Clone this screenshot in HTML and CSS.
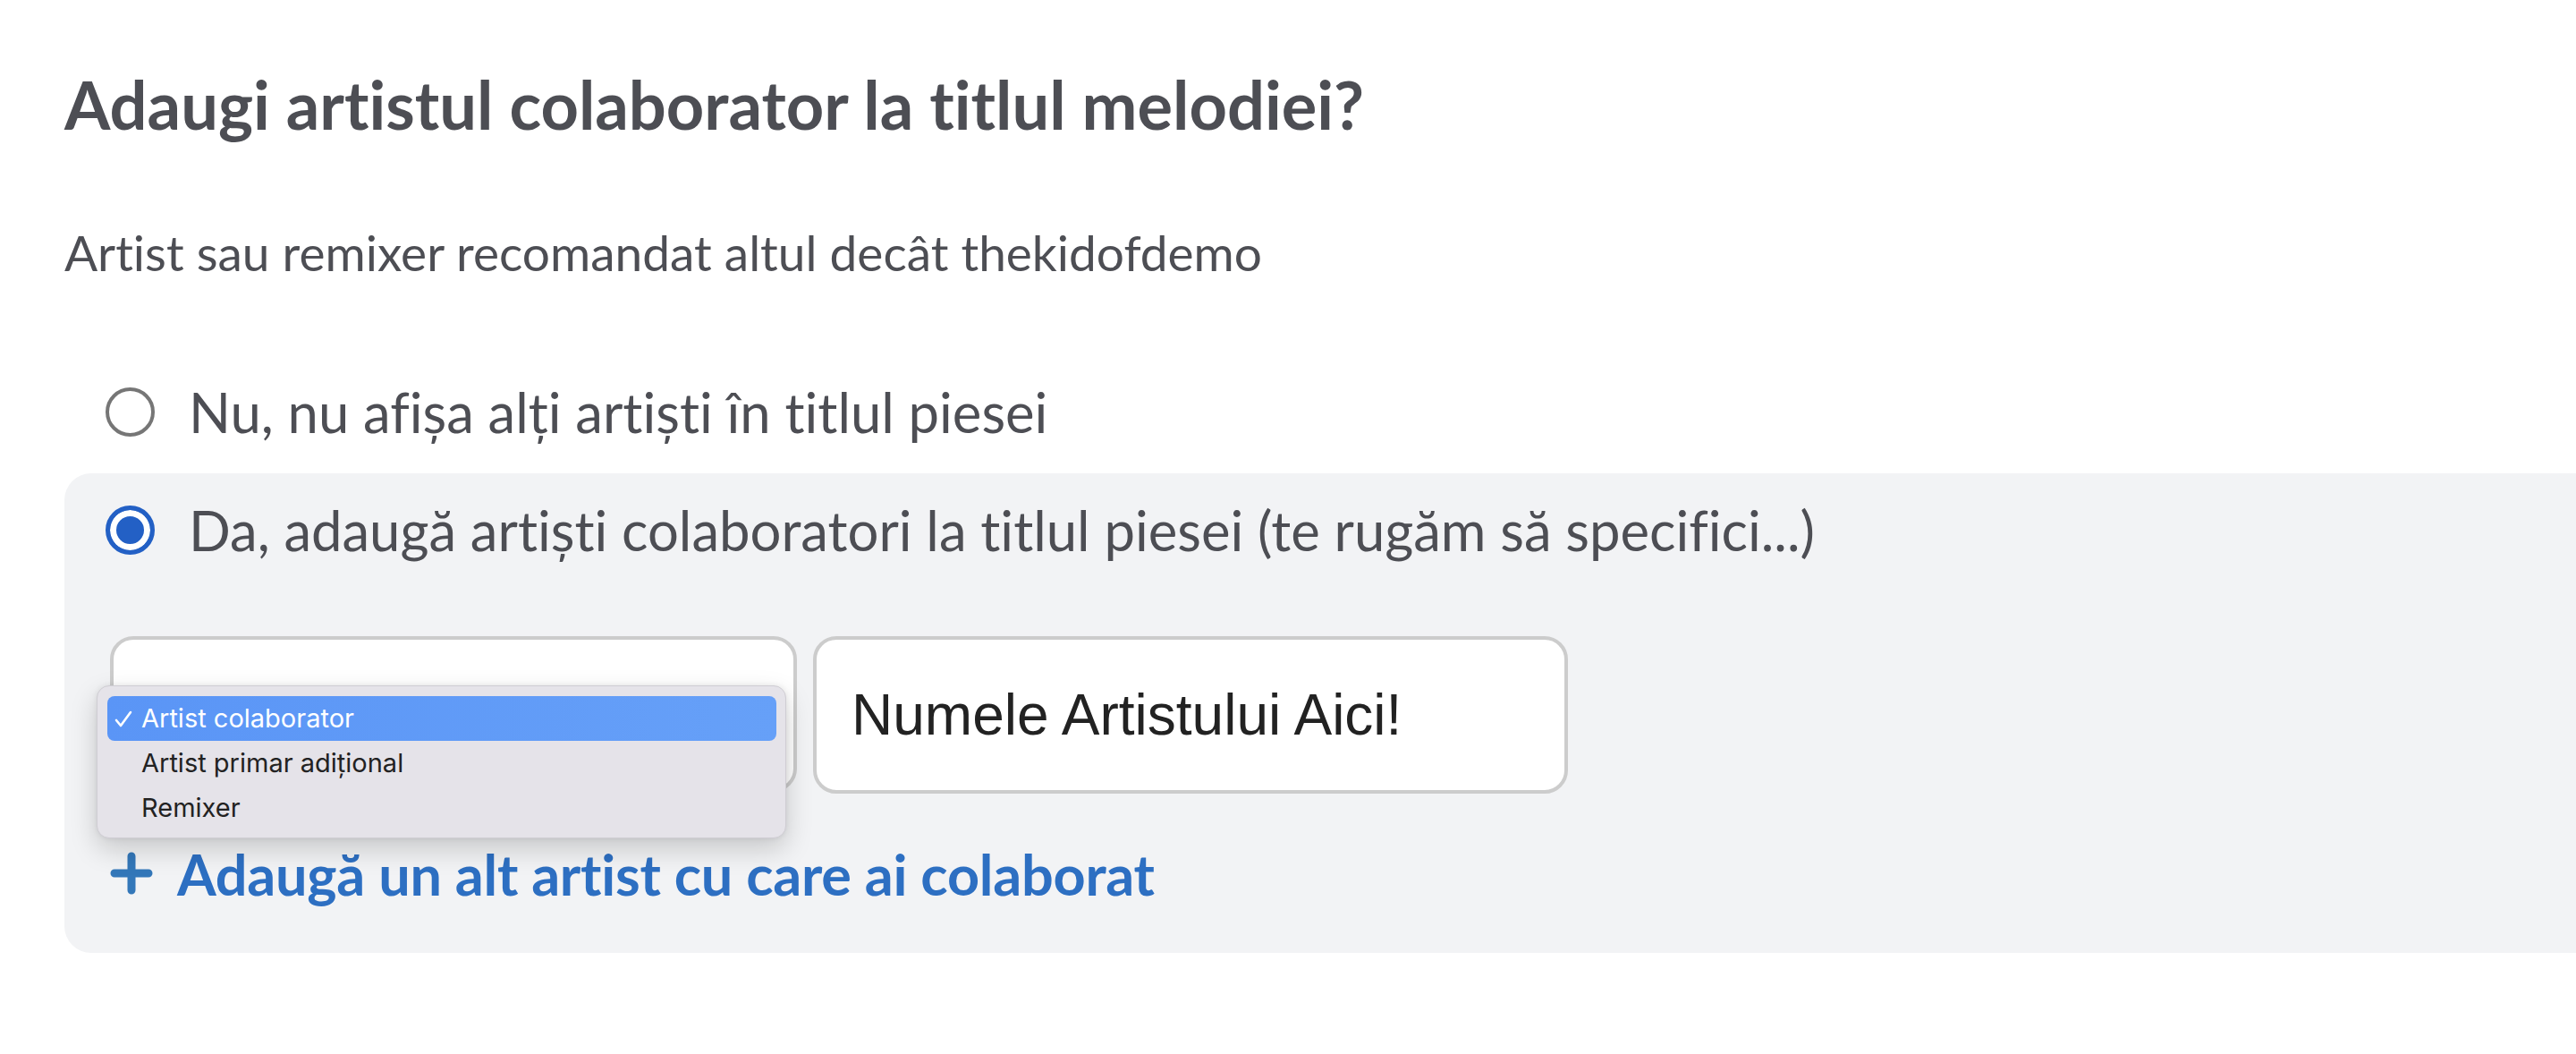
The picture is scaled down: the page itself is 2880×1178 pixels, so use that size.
FILE: index.html
```html
<!DOCTYPE html>
<html lang="ro">
<head>
    <meta charset="UTF-8">
    <meta name="viewport" content="width=device-width, initial-scale=1.0">
    <title>Artist colaborator</title>
    <link rel="stylesheet" href="styles.css">
</head>
<body>
    <main class="page">
        <h1 class="title">Adaugi artistul colaborator la titlul melodiei?</h1>
        <p class="hint">Artist sau remixer recomandat altul decât thekidofdemo</p>

        <div class="options">
            <label class="option">
                <input type="radio" name="featured" class="radio">
                <span class="option-text">Nu, nu afișa alți artiști în titlul piesei</span>
            </label>

            <div class="option option-selected">
                <label class="option-row">
                    <input type="radio" name="featured" class="radio" checked>
                    <span class="option-text">Da, adaugă artiști colaboratori la titlul piesei (te rugăm să specifici...)</span>
                </label>

                <div class="fields">
                    <div class="select-wrap">
                        <div class="select-box"></div>
                        <ul class="popup-menu">
                            <li class="popup-item active">
                                <svg class="check" viewBox="0 0 20 20" width="20" height="20">
                                    <path d="M2 11 L7 17 L18 2" fill="none" stroke="currentColor" stroke-width="2.6" stroke-linecap="round" stroke-linejoin="round"/>
                                </svg>
                                Artist colaborator
                            </li>
                            <li class="popup-item">Artist primar adițional</li>
                            <li class="popup-item">Remixer</li>
                        </ul>
                    </div>
                    <input type="text" class="text-field" value="Numele Artistului Aici!">
                </div>

                <a href="#" class="add-link">
                    <svg class="plus" viewBox="0 0 48 48" width="48" height="48">
                        <path d="M24 5 V43 M5 24 H43" stroke="currentColor" stroke-width="9" stroke-linecap="round"/>
                    </svg>
                    Adaugă un alt artist cu care ai colaborat
                </a>
            </div>
        </div>
    </main>
</body>
</html>
```

FILE: styles.css
```css
* {
    margin: 0;
    padding: 0;
    box-sizing: border-box;
}

html, body {
    width: 100%;
    height: 100%;
    overflow: hidden;
}

body {
    background: #fff;
    font-family: 'Lato', 'Noto Sans', sans-serif;
    font-variant-ligatures: no-common-ligatures;
    color: #4d4e54;
}

.page {
    padding: 73px 0 0 72px;
}

.title {
    font-size: 74px;
    font-weight: 700;
    line-height: 1.2;
}

.hint {
    margin-top: 87px;
    font-size: 55px;
    line-height: 1.2;
}

.options {
    margin-top: 81px;
}

.option {
    display: flex;
    align-items: center;
    padding: 28px 46px 31px;
}

.option-text {
    font-size: 61.6px;
    line-height: 1.2;
}

.option-selected {
    display: block;
    background: #f2f3f5;
    border-radius: 30px 0 0 30px;
    padding: 27px 0 51px 46px;
}

.option-row {
    display: flex;
    align-items: center;
}

.radio {
    appearance: none;
    -webkit-appearance: none;
    flex: none;
    width: 55px;
    height: 55px;
    margin-right: 38px;
    border: 4px solid #767676;
    border-radius: 50%;
    background: #fff;
}

.radio:checked {
    border: 5px solid #2360c5;
    background: #2360c5;
    box-shadow: inset 0 0 0 7px #fff;
}

.fields {
    display: flex;
    gap: 18px;
    margin-top: 81px;
    padding-left: 5px;
}

.select-wrap {
    position: relative;
    width: 768px;
    height: 176px;
}

.select-box {
    width: 100%;
    height: 174px;
    background: #fff;
    border: 4px solid #cccccc;
    border-radius: 26px;
}

.text-field {
    width: 844px;
    height: 176px;
    padding: 0 0 0 39px;
    background: #fff;
    border: 4px solid #cccccc;
    border-radius: 26px;
    font-family: 'Liberation Sans', Arial, sans-serif;
    font-size: 64px;
    color: #222;
    outline: none;
}

.popup-menu {
    position: absolute;
    top: 55px;
    left: -15px;
    width: 771px;
    height: 171px;
    padding: 11px 10px 10px 11px;
    list-style: none;
    background: #e5e3e9;
    border: 1px solid #cfcdd3;
    border-radius: 14px;
    box-shadow: 0 12px 30px rgba(0, 0, 0, 0.18), 0 0 6px rgba(0, 0, 0, 0.08);
    font-family: 'Inter', 'Roboto', sans-serif;
    font-size: 29px;
    color: #222;
}

.popup-item {
    display: flex;
    align-items: center;
    height: 50px;
    padding-left: 38px;
    border-radius: 8px;
}

.popup-item.active {
    position: relative;
    color: #fff;
    background: linear-gradient(90deg, #5a95f6 0%, #66a0f8 100%);
}

.check {
    position: absolute;
    left: 8px;
    top: 16px;
}

.add-link {
    display: inline-flex;
    align-items: center;
    margin-top: 52px;
    padding-left: 5px;
    font-size: 63px;
    font-weight: 700;
    line-height: 1.2;
    letter-spacing: -0.25px;
    color: #2d6fc2;
    text-decoration: none;
}

.plus {
    width: 48px;
    height: 48px;
    margin-right: 27px;
    color: #3377b9;
}
```
